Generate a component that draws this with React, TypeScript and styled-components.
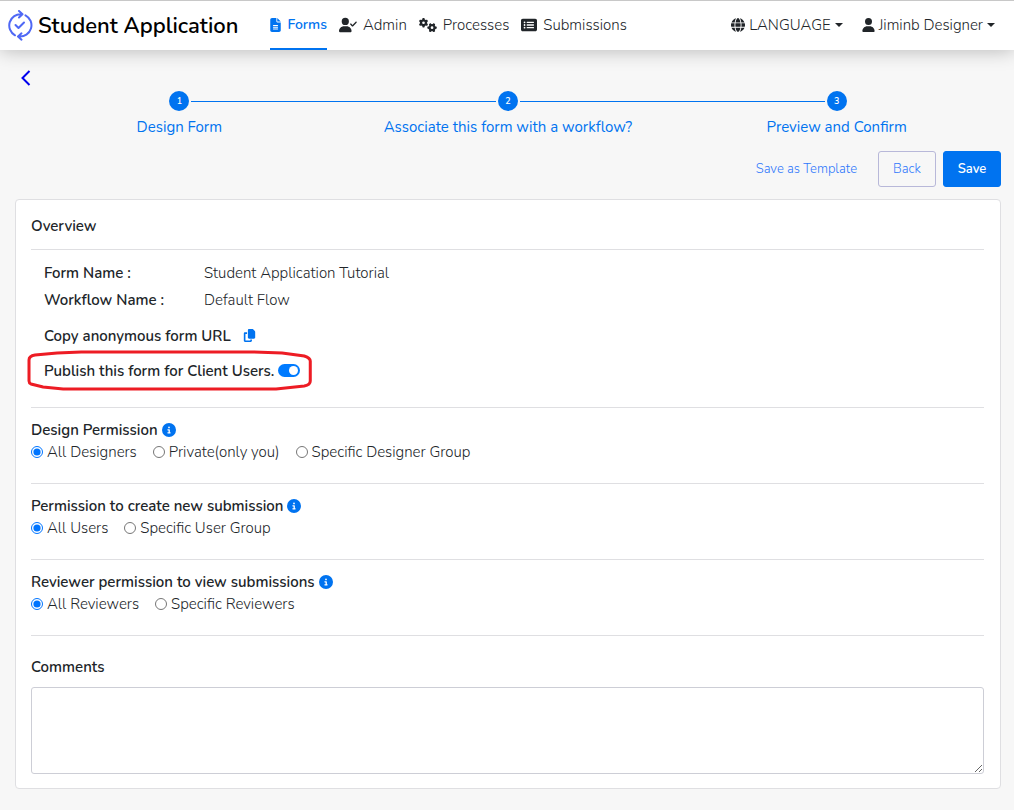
import React, { useState } from "react";
import styled, { createGlobalStyle } from "styled-components";
import { FaFileLines, FaUserCheck, FaGears, FaRectangleList, FaGlobe, FaUser, FaCopy, FaCircleInfo } from "react-icons/fa6";

const GlobalStyle = createGlobalStyle`
  *, *::before, *::after { box-sizing: border-box; }
  body {
    margin: 0;
    background: #f7f7f7;
    color: #212529;
    font-family: Nunito, "Open Sans", "Noto Sans", sans-serif;
    font-size: 15px;
    font-weight: 300;
    line-height: 20px;
  }
  button, input, textarea { font: inherit; margin: 0; }
  h1, h2, p, ol, dl, dd, fieldset { margin: 0; padding: 0; border: 0; }
`;

const Header = styled.header`
  position: relative;
  display: flex;
  align-items: stretch;
  height: 50px;
  padding: 0 19px 0 7px;
  border-top: 1px solid #c8c8c8;
  background: #fff;
  box-shadow: 0 0 20px rgba(0, 0, 0, 0.28);
`;

const Brand = styled.a`
  display: flex;
  align-items: center;
  gap: 5px;
  margin-right: 32px;
  color: #000;
  font-size: 22px;
  font-weight: 600;
  text-decoration: none;
  white-space: nowrap;
`;

const Nav = styled.nav`
  display: flex;
  gap: 12px;
`;

const NavLink = styled.a<{ $active?: boolean }>`
  display: flex;
  align-items: center;
  gap: 6px;
  border-bottom: 2px solid ${(p) => (p.$active ? "#0073f0" : "transparent")};
  color: ${(p) => (p.$active ? "#0073f0" : "#212529")};
  font-size: ${(p) => (p.$active ? "14px" : "15px")};
  font-weight: ${(p) => (p.$active ? 600 : 300)};
  text-decoration: none;
  white-space: nowrap;
`;

const FileIcon = styled(FaFileLines)`
  width: 11px;
  height: 14px;
`;

const UserIcon = styled(FaUser)`
  width: 13px;
  height: 14px;
`;

const UserMenus = styled.div`
  display: flex;
  gap: 19px;
  margin-left: auto;
`;

const MenuButton = styled.button`
  display: flex;
  align-items: center;
  gap: 4px;
  padding: 0 0 2px;
  border: 0;
  background: none;
  color: #212529;
  white-space: nowrap;
`;

const Caret = styled.span`
  border: 4px solid transparent;
  border-top-color: currentColor;
  border-bottom: 0;
`;

const Page = styled.main`
  padding: 18px 13px 21px 15px;
`;

const BackLink = styled.a`
  display: block;
  width: 20px;
  height: 20px;
  color: #0000ee;
`;

const Steps = styled.ol`
  display: grid;
  grid-template-columns: repeat(3, 1fr);
  list-style: none;
`;

const Step = styled.li`
  display: flex;
  flex-direction: column;
  gap: 6px;
  margin-top: 3px;
  color: #0073f0;
  font-weight: 400;
  text-align: center;
`;

const StepTrack = styled.div`
  display: flex;
  align-items: center;
  gap: 2px;
`;

const StepLine = styled.span<{ $hidden?: boolean }>`
  flex: 1;
  height: 1px;
  background: ${(p) => (p.$hidden ? "transparent" : "#0073f0")};
`;

const StepDot = styled.span`
  width: 20px;
  height: 20px;
  border-radius: 50%;
  background: #0073f0;
  color: #fff;
  font-size: 9px;
  font-weight: 600;
`;

const Actions = styled.div`
  display: flex;
  justify-content: flex-end;
  gap: 7px;
  margin: 14px 0 12px;
`;

const ActionButton = styled.button<{ $kind: "text" | "outline" | "solid" }>`
  height: 36px;
  min-width: 58px;
  padding: 0 13px;
  border: 1px solid ${(p) => ({ text: "transparent", outline: "#b8b8d9", solid: "#0073f0" })[p.$kind]};
  border-radius: 3px;
  background: ${(p) => (p.$kind === "solid" ? "#0073f0" : "transparent")};
  color: ${(p) => (p.$kind === "solid" ? "#fff" : "#2f78fb")};
  font-size: 13px;
  font-weight: ${(p) => (p.$kind === "solid" ? 600 : 300)};
`;

const Card = styled.section`
  padding: 16px 16px 14px 15px;
  border: 1px solid #dfdfe2;
  border-radius: 4px;
  background: #fff;
`;

const Title = styled.h2`
  display: flex;
  align-items: center;
  gap: 4px;
  font-size: 15px;
  font-weight: 600;
  line-height: 20px;
`;

const Overview = styled.div`
  padding-bottom: 13px;
  border-bottom: 1px solid #dfdfe2;
`;

const Details = styled.div`
  padding: 10px 13px 19px;
  border-bottom: 1px solid #dfdfe2;
`;

const Facts = styled.dl`
  display: grid;
  grid-template-columns: 160px 1fr;
  line-height: 27px;
  margin-bottom: 4px;

  dt { font-weight: 600; }
`;

const DetailRow = styled.div`
  display: flex;
  align-items: center;
  height: 35px;
  font-weight: 600;
`;

const CopyButton = styled.button`
  display: flex;
  margin-left: 12px;
  padding: 0;
  border: 0;
  background: none;
  color: #0073f0;
`;

const PublishRow = styled.label`
  position: relative;
  display: flex;
  align-items: center;
  gap: 4px;
  width: fit-content;
  height: 35px;
  font-weight: 600;
`;

const Highlight = styled.svg`
  position: absolute;
  inset: -3px -12px -3px -17px;
  width: calc(100% + 29px);
  height: 41px;
  pointer-events: none;
`;

const Switch = styled.input`
  appearance: none;
  display: flex;
  align-items: center;
  width: 22px;
  height: 13px;
  padding: 0 2px;
  border-radius: 7px;
  background: #adb5bd;

  &::before {
    content: "";
    width: 9px;
    height: 9px;
    border-radius: 50%;
    background: #fff;
  }
  &:checked { justify-content: flex-end; background: #007bff; }
`;

const Permission = styled.fieldset`
  height: 76px;
  padding-top: 12px;
  border-bottom: 1px solid #dfdfe2;
`;

const InfoIcon = styled(FaCircleInfo)`
  color: #0073f0;
`;

const Options = styled.div`
  display: flex;
  gap: 16px;
  padding-top: 2px;
`;

const Option = styled.label`
  display: flex;
  align-items: center;
  gap: 4px;
`;

const Radio = styled.input`
  width: 12px;
  height: 12px;
  accent-color: #0075ff;
`;

const CommentsLabel = styled.label`
  display: block;
  margin: 21px 0 10px;
  font-weight: 600;
`;

const CommentsBox = styled.textarea`
  display: block;
  width: 100%;
  height: 87px;
  padding: 6px 12px;
  border: 1px solid #cdced6;
  border-radius: 3px;
  background: #fff;
  resize: vertical;
`;

const permissions = [
  { id: "design", title: "Design Permission", options: ["All Designers", "Private(only you)", "Specific Designer Group"] },
  { id: "create", title: "Permission to create new submission", options: ["All Users", "Specific User Group"] },
  { id: "review", title: "Reviewer permission to view submissions", options: ["All Reviewers", "Specific Reviewers"] },
];

const steps = ["Design Form", "Associate this form with a workflow?", "Preview and Confirm"];

function Logo() {
  return (
    <svg width="26" height="32" viewBox="0 0 26 32" fill="none" stroke="#4f68f5" strokeWidth="2" strokeLinecap="round" strokeLinejoin="round" aria-hidden="true">
      <path d="M8 25.3A11.3 11.3 0 0 1 14.5 4.2M12 1L15.5 4.3L12 7.5" />
      <path d="M18.5 5.3A11.3 11.3 0 0 1 12 26.5M14.5 23.3L11 26.5L14.5 29.7" />
      <path d="M8.5 15L11.5 18L17 12.5" />
    </svg>
  );
}

export default function App() {
  const [published, setPublished] = useState(true);
  return (
    <>
      <GlobalStyle />
      <Header>
        <Brand href="#"><Logo />Student Application</Brand>
        <Nav>
          <NavLink href="#forms" $active><FileIcon />Forms</NavLink>
          <NavLink href="#admin"><FaUserCheck size={18} />Admin</NavLink>
          <NavLink href="#processes"><FaGears size={18} />Processes</NavLink>
          <NavLink href="#submissions"><FaRectangleList size={16} />Submissions</NavLink>
        </Nav>
        <UserMenus>
          <MenuButton type="button"><FaGlobe size={14} />LANGUAGE<Caret /></MenuButton>
          <MenuButton type="button"><UserIcon />Jiminb Designer<Caret /></MenuButton>
        </UserMenus>
      </Header>
      <Page>
        <BackLink href="#back" aria-label="Back to forms">
          <svg width="20" height="20" viewBox="0 0 20 20" fill="none" stroke="currentColor" strokeWidth="2">
            <path d="M14.5 3L7.5 10L14.5 17" />
          </svg>
        </BackLink>
        <Steps>
          {steps.map((label, i) => (
            <Step key={label}>
              <StepTrack>
                <StepLine $hidden={i === 0} />
                <StepDot>{i + 1}</StepDot>
                <StepLine $hidden={i === steps.length - 1} />
              </StepTrack>
              {label}
            </Step>
          ))}
        </Steps>
        <Actions>
          <ActionButton type="button" $kind="text">Save as Template</ActionButton>
          <ActionButton type="button" $kind="outline">Back</ActionButton>
          <ActionButton type="button" $kind="solid">Save</ActionButton>
        </Actions>
        <Card>
          <Overview><Title>Overview</Title></Overview>
          <Details>
            <Facts>
              <dt>Form Name :</dt><dd>Student Application Tutorial</dd>
              <dt>Workflow Name :</dt><dd>Default Flow</dd>
            </Facts>
            <DetailRow>
              Copy anonymous form URL
              <CopyButton type="button" aria-label="Copy URL"><FaCopy size={13} /></CopyButton>
            </DetailRow>
            <PublishRow>
              Publish this form for Client Users.
              <Switch type="checkbox" role="switch" checked={published} onChange={(e) => setPublished(e.target.checked)} />
              <Highlight viewBox="0 0 284 41" preserveAspectRatio="none" fill="none" stroke="#ed1c24" strokeWidth="3" aria-hidden="true">
                <path d="M54 2H226L254 3L276 6Q282 8 282 11V31Q282 35 276 36L248 39H36L16 37L4 34Q2 33 2 31V10Q2 6 8 5L30 3Z" />
              </Highlight>
            </PublishRow>
          </Details>
          {permissions.map((p) => (
            <Permission key={p.id} aria-labelledby={p.id}>
              <Title id={p.id}>{p.title}<InfoIcon size={14} /></Title>
              <Options>
                {p.options.map((o, i) => (
                  <Option key={o}><Radio type="radio" name={p.id} defaultChecked={i === 0} />{o}</Option>
                ))}
              </Options>
            </Permission>
          ))}
          <CommentsLabel htmlFor="comments">Comments</CommentsLabel>
          <CommentsBox id="comments" />
        </Card>
      </Page>
    </>
  );
}
